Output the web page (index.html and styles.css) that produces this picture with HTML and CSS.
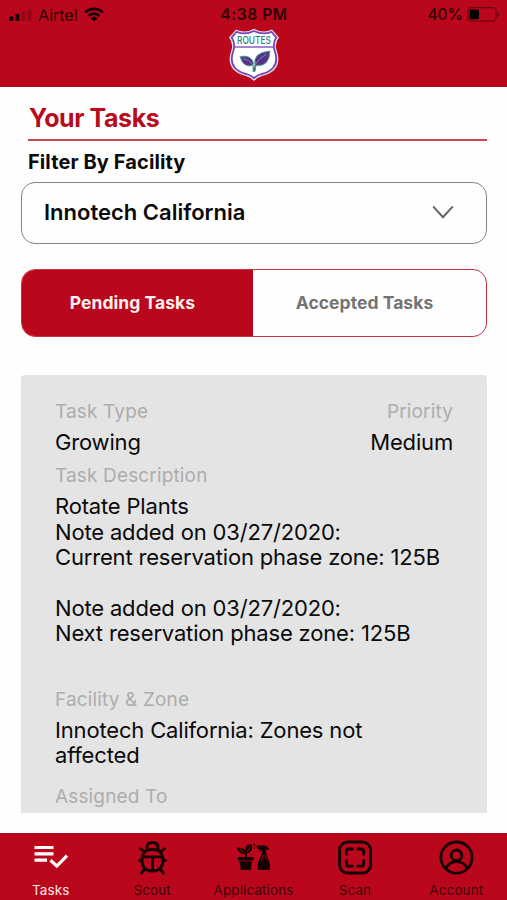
FILE: index.html
```html
<!DOCTYPE html>
<html lang="en">
<head>
    <meta charset="UTF-8">
    <meta name="viewport" content="width=device-width, initial-scale=1.0">
    <title>Your Tasks</title>
    <link rel="stylesheet" href="styles.css">
</head>
<body>
    <div class="app">
        <!-- Header -->
        <div class="header">
            <div class="status-bar">
                <div class="status-left">
                    <svg class="signal" width="23" height="12" viewBox="0 0 23 12">
                        <rect x="0.5" y="7.5" width="4" height="4.5" rx="0.8"/>
                        <rect x="6.5" y="5" width="4" height="7" rx="0.8"/>
                        <rect x="12.5" y="2.5" width="4" height="9.5" rx="0.8" opacity="0.22"/>
                        <rect x="18.5" y="0" width="4" height="12" rx="0.8" opacity="0.22"/>
                    </svg>
                    <span class="carrier">Airtel</span>
                    <svg class="wifi" width="20" height="15" viewBox="0 0 20 15">
                        <path d="M1.2 5.4a12.6 12.6 0 0 1 17.6 0M4.5 8.8a8 8 0 0 1 11 0" fill="none" stroke="#160003" stroke-width="2.7"/>
                        <path d="M6.6 11.2a5 5 0 0 1 6.8 0L10 14.6z"/>
                    </svg>
                </div>
                <div class="status-time">4:38 PM</div>
                <div class="status-right">
                    <span class="percent">40%</span>
                    <svg class="battery" width="33" height="15" viewBox="0 0 33 15">
                        <rect x="0.7" y="0.7" width="28.4" height="13.4" rx="3.6" fill="none" stroke="#6d0410" stroke-width="1.3"/>
                        <rect x="2.6" y="2.6" width="9.4" height="9.6" rx="1.4" fill="#000"/>
                        <path d="M30.6 5v5c2-.7 2-4.3 0-5z" fill="#6d0410"/>
                    </svg>
                </div>
            </div>
            <svg class="logo" width="52" height="54" viewBox="0 0 52 54">
                <path d="M8 1.5Q17 6 26 .8Q35 6 44 1.5L51 9.5Q46.5 15 48.5 22Q53 34 47 41Q43 46 34 48Q29 49.5 26 53Q23 49.500 18 48Q9 46 5 41Q-1 34 3.5 22Q5.5 15 1 9.5z" fill="#e8dcf4"/>
                <path d="M8.5 3.8Q17 7.5 26 3Q35 7.5 43.5 3.8L48.3 9.6Q44.5 15 46.5 22.5Q50.5 33 45.3 39.5Q41.5 44.2 33.5 46Q29 47.3 26 50Q23 47.3 18.5 46Q10.5 44.2 6.7 39.5Q1.5 33 5.5 22.5Q7.5 15 3.7 9.6z" fill="#fff" stroke="#7547b0" stroke-width="1.8"/>
                <path d="M6.5 19H45.500" stroke="#8a5cc0" stroke-width="1.3"/>
                <text x="9" y="16.3" textLength="34" lengthAdjust="spacingAndGlyphs" class="logo-text">ROUTES</text>
                <path d="M25 43.500V37.500Q15 40 12 28.500Q23 26.500 25.500 35" fill="#57308c" stroke="#58a98c" stroke-width="1"/>
                <path d="M25 43.500Q25.500 39 27 37Q24.500 24.500 42 23Q41.500 39 28 37.500L27 43.500z" fill="#57308c" stroke="#58a98c" stroke-width="1"/>
                <path d="M15 30.500Q21 31.500 25 37M38.500 26Q31.500 29.500 27 37" fill="none" stroke="#5cb296" stroke-width="0.8"/>
            </svg>
        </div>

        <!-- Content -->
        <div class="content">
            <h1 class="page-title">Your Tasks</h1>
            <div class="filter-label">Filter By Facility</div>
            <div class="select">
                <span class="select-value">Innotech California</span>
                <svg width="22" height="14" viewBox="0 0 22 14">
                    <path d="M1.8 2.1L11 12.3L20.2 2.1" fill="none" stroke="#666" stroke-width="2.1" stroke-linecap="round"/>
                </svg>
            </div>

            <div class="tabs">
                <div class="tab active">Pending Tasks</div>
                <div class="tab">Accepted Tasks</div>
            </div>

            <!-- Task card -->
            <div class="card">
                <div class="card-row">
                    <span class="label">Task Type</span>
                    <span class="label">Priority</span>
                </div>
                <div class="card-row value-row">
                    <span class="value">Growing</span>
                    <span class="value">Medium</span>
                </div>
                <div class="label">Task Description</div>
                <div class="value description">Rotate Plants<br>Note added on 03/27/2020:<br>Current reservation phase zone: 125B<br><br>Note added on 03/27/2020:<br>Next reservation phase zone: 125B</div>
                <div class="label">Facility &amp; Zone</div>
                <div class="value facility">Innotech California: Zones not<br>affected</div>
                <div class="label">Assigned To</div>
            </div>
        </div>

        <!-- Bottom navigation -->
        <div class="bottom-nav">
            <div class="nav-item active">
                <svg width="36" height="36" viewBox="0 0 36 36">
                    <path d="M1.500 7.500H20.500M1.500 13.800H20.500M1.500 20.200H14" stroke="#fff" stroke-width="3.2" fill="none"/>
                    <path d="M17.500 20.200L23.800 26L34 15.600" stroke="#fff" stroke-width="3.2" fill="none"/>
                </svg>
                <span>Tasks</span>
            </div>
            <div class="nav-item">
                <svg width="36" height="36" viewBox="0 0 36 36">
                    <g fill="none" stroke="#160003" stroke-width="2.8" stroke-linecap="round">
                        <path d="M13 9.500V7.500Q13 2.500 18.500 2.500Q24 2.500 24 7.500V9.500"/>
                        <path d="M12 11Q18.500 8 25 11Q29 14 29 20Q29 31 18.500 31Q8 31 8 20Q8 14 12 11z"/>
                        <path d="M9 16.800H28M18.500 17V30M11 12L6.500 8.800M26 12L30.500 8.800M8 20.500H5.500M29 20.500H31.500M11 29L7.500 33M26 29L29.500 33"/>
                    </g>
                </svg>
                <span>Scout</span>
            </div>
            <div class="nav-item">
                <svg width="36" height="36" viewBox="0 0 36 36">
                    <g fill="#160003">
                        <path d="M2 17H17.500V20.600H2zM3.500 21.200H16L14.800 30H4.800z"/>
                        <path d="M9 17V14.200Q1.500 13.800 1 7.500Q6.500 7 9 10Q9 5 15.500 3.800Q18 11.500 11 13.800V17z"/>
                        <path d="M21.500 5.500H28.500Q32 6 33.500 10L30 9.500V13H26V9.800L22.500 12.500L24 9H21.500z"/>
                        <path d="M22 30Q21 24 22.500 21.500Q24.500 17 26.300 12.500H30Q31.500 17 33 21.500Q34.500 24 33.500 30z"/>
                        <path d="M17.500 4h1.500v1.500h-1.500zM17.500 7.500h1.500v1.500h-1.500zM19.500 5.700h1.300v1.300h-1.300z"/>
                    </g>
                    <path d="M10.500 12.500L15 6.500M8.500 12.500L4 9M27.300 14.500L25.300 20.500M29.200 14.500L30.800 20.500" stroke="#ba071b" stroke-width="0.8" fill="none"/>
                </svg>
                <span>Applications</span>
            </div>
            <div class="nav-item">
                <svg width="36" height="36" viewBox="0 0 36 36">
                    <g fill="none" stroke="#160003">
                        <rect x="2.600" y="2.100" width="31" height="31" rx="8" stroke-width="3"/>
                        <path d="M15.500 9H12Q9.500 9 9.500 11.500V14.500M20.700 9H24.200Q26.700 9 26.700 11.500V14.500M15.500 26.200H12Q9.500 26.200 9.500 23.700V20.700M20.700 26.200H24.200Q26.700 26.200 26.700 23.700V20.700" stroke-width="2.8" stroke-linecap="round"/>
                    </g>
                </svg>
                <span>Scan</span>
            </div>
            <div class="nav-item">
                <svg width="36" height="36" viewBox="0 0 36 36">
                    <g fill="none" stroke="#160003" stroke-width="2.8">
                        <circle cx="18.500" cy="17.600" r="15.600"/>
                        <circle cx="18.500" cy="15.300" r="5.300"/>
                        <path d="M7.700 29Q11 21.700 18.500 21.700Q26 21.700 29.300 29"/>
                    </g>
                </svg>
                <span>Account</span>
            </div>
        </div>
    </div>
</body>
</html>
```

FILE: styles.css
```css
* {
    margin: 0;
    padding: 0;
    box-sizing: border-box;
}

body {
    font-family: Inter, "Liberation Sans", sans-serif;
    background: #fefefe;
    color: #0a0a0a;
}

.app {
    display: flex;
    flex-direction: column;
    height: 900px;
    overflow: hidden;
}

/* Header */
.header {
    height: 87px;
    flex-shrink: 0;
    background: #ba071b;
    color: #2a0206;
}

.status-bar {
    display: grid;
    grid-template-columns: 1fr auto 1fr;
    align-items: center;
    height: 28px;
    padding: 1px 7px 0 9px;
    font-size: 15.5px;
    line-height: 20px;
}

.status-left,
.status-right {
    display: flex;
    align-items: center;
}

.status-right {
    justify-content: flex-end;
    gap: 4px;
}

.signal,
.wifi {
    fill: #160003;
}

.carrier {
    margin: 0 6px 0 6px;
    font-size: 16px;
}

.status-time {
    font-weight: 600;
    letter-spacing: 0.6px;
    margin-right: 1px;
}

.percent {
    font-weight: 500;
}

.logo {
    display: block;
    margin: 0 auto;
}

.logo-text {
    font-size: 10.5px;
    font-weight: 500;
    fill: #2f7f73;
}

/* Content */
.content {
    flex: 1;
    min-height: 0;
    padding: 15px 20px 0 21px;
    display: flex;
    flex-direction: column;
}

.page-title {
    margin-left: 7px;
    padding-left: 1px;
    height: 39px;
    border-bottom: 2px solid #cf4553;
    color: #b90a1d;
    font-size: 25px;
    font-weight: 650;
    letter-spacing: -0.4px;
    line-height: 32px;
}

.filter-label {
    margin: 9px 0 8px 7px;
    height: 24px;
    font-size: 20px;
    font-weight: 650;
    letter-spacing: 0.1px;
    line-height: 25px;
}

.select {
    display: flex;
    align-items: center;
    justify-content: space-between;
    height: 62px;
    flex-shrink: 0;
    padding: 0 32px 2px 22px;
    border: 1.5px solid #858585;
    border-radius: 14px;
    font-size: 22px;
    font-weight: 560;
}

/* Tabs */
.tabs {
    display: flex;
    height: 68px;
    flex-shrink: 0;
    margin-top: 25px;
    border: 1.5px solid #c73543;
    border-radius: 14px;
    overflow: hidden;
}

.tab {
    flex: 1;
    display: flex;
    align-items: center;
    justify-content: center;
    padding: 0 10px 2px 0;
    color: #747474;
    font-size: 17.5px;
    font-weight: 650;
    letter-spacing: 0.05px;
}

.tab.active {
    flex: 0 0 231px;
    background: #ba071b;
    color: #fff1f1;
}

/* Task card */
.card {
    height: 438px;
    margin-top: 38px;
    padding: 24px 34px 0;
    background: #e4e4e4;
    border-radius: 4px 4px 0 0;
    overflow: hidden;
}

.card-row {
    display: flex;
    justify-content: space-between;
}

.label {
    color: #adadad;
    font-size: 19px;
    letter-spacing: 0.15px;
    line-height: 25px;
}

.value {
    font-size: 22px;
    letter-spacing: -0.17px;
    line-height: 25.4px;
    white-space: nowrap;
}

.value-row {
    margin: 6px 0 8px;
}

.description {
    margin: 6px 0 40px;
}

.facility {
    margin: 6px 0 15px;
}

/* Bottom navigation */
.bottom-nav {
    display: flex;
    height: 67px;
    flex-shrink: 0;
    background: #ba071b;
    color: #3c030a;
}

.nav-item {
    flex: 1;
    display: flex;
    flex-direction: column;
    align-items: center;
    padding-top: 7px;
    font-size: 13.5px;
    letter-spacing: 0.1px;
    line-height: 16px;
}

.nav-item svg {
    margin-bottom: 6px;
}

.nav-item.active {
    color: #ffe9e9;
}
```
